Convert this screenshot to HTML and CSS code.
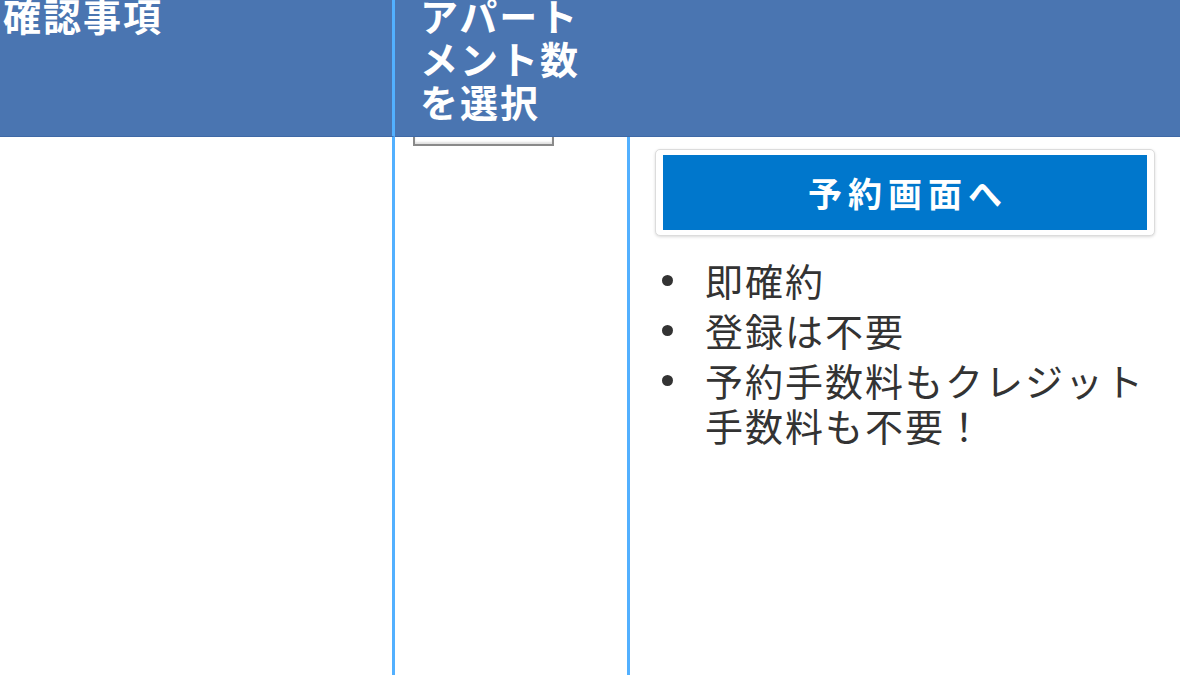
FILE: index.html
```html
<!DOCTYPE html>
<html lang="ja">
<head>
<meta charset="utf-8">
<title>予約</title>
<link rel="stylesheet" href="styles.css">
</head>
<body>
<div class="table">
  <div class="th th-first">確認事項</div>
  <div class="th th-second">アパートメント数を選択</div>
  <div class="th th-third"></div>

  <div class="td td-first"></div>
  <div class="td td-second"><div class="select-edge"></div></div>
  <div class="td td-third">
    <div class="btn-frame"><div class="btn">予約画面へ</div></div>
    <ul class="features">
      <li>即確約</li>
      <li>登録は不要</li>
      <li>予約手数料もクレジット手数料も不要！</li>
    </ul>
  </div>
</div>
</body>
</html>
```

FILE: styles.css
```css
html, body {
  margin: 0;
  padding: 0;
  background: #ffffff;
  overflow: hidden;
  height: 675px;
}
body {
  font-family: "Noto Sans CJK JP", "Noto Sans", sans-serif;
}
.table {
  display: grid;
  grid-template-columns: 395px 235px 550px;
  grid-template-rows: 144px 560px;
  margin-top: -7px;
}
.th {
  background: #4a75b1;
  border-bottom: 1px solid #3f69a6;
  color: #ffffff;
  font-weight: 700;
  font-size: 38px;
  letter-spacing: 2px;
  line-height: 43px;
}
.th-first {
  padding-left: 3px;
  border-right: 3px solid #52b0ff;
}
.th-second {
  padding-left: 25px;
  padding-right: 20px;
}
.td-first {
  border-right: 3px solid #52b0ff;
}
.td-second {
  border-right: 3px solid #52b0ff;
}
.select-edge {
  margin-left: 18px;
  width: 137px;
  height: 7px;
  border: 2px solid #8a8a8a;
  border-top: none;
  box-shadow: inset 0 -2px 2px rgba(0,0,0,0.12);
}
.td-third {
  padding: 12px 25px 0 25px;
}
.btn-frame {
  border: 1px solid #dcdcdc;
  border-radius: 5px;
  padding: 5px 7px;
  box-shadow: 0 1px 3px rgba(0,0,0,0.15);
  background: #ffffff;
}
.btn {
  background: #0077cc;
  color: #ffffff;
  height: 75px;
  display: flex;
  align-items: center;
  justify-content: center;
  font-weight: 700;
  font-size: 34px;
  letter-spacing: 6px;
  padding-left: 6px;
}
.features {
  list-style: none;
  margin: 21px 0 0 0;
  padding: 0 0 0 50px;
  color: #333333;
  font-size: 38px;
  letter-spacing: 2px;
  line-height: 45px;
}
.features li {
  position: relative;
  margin-bottom: 5px;
}
.features li::before {
  content: "";
  position: absolute;
  left: -43px;
  top: 18px;
  width: 11px;
  height: 11px;
  border-radius: 50%;
  background: #333333;
}
```
